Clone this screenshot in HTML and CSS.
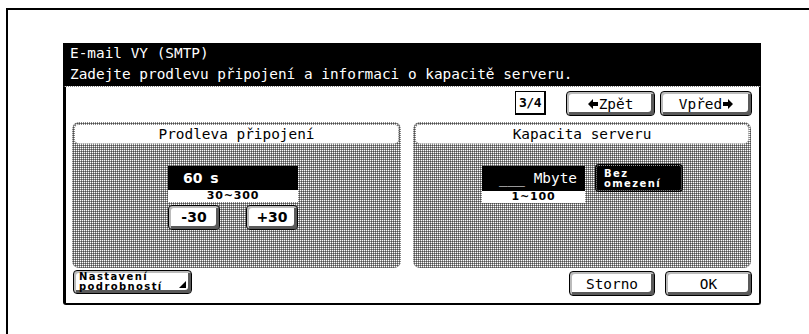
FILE: index.html
```html
<!DOCTYPE html>
<html lang="cs">
<head>
<meta charset="utf-8">
<title>E-mail VY (SMTP)</title>
<link rel="stylesheet" href="styles.css">
</head>
<body>
<div class="frame">
  <div class="panel">
    <div class="header">
      <div class="hline">E-mail VY (SMTP)</div>
      <div class="hline">Zadejte prodlevu připojení a informaci o kapacitě serveru.</div>
    </div>
    <div class="body">
      <div class="nav">
        <div class="page">3/4</div>
        <div class="btn navbtn"><svg class="arrow" viewBox="0 0 10 10" width="10" height="10"><path d="M0 5 L5 0 L5 3 L10 3 L10 7 L5 7 L5 10 Z" fill="#000"/></svg>Zpět</div>
        <div class="btn navbtn">Vpřed<svg class="arrow" viewBox="0 0 10 10" width="10" height="10"><path d="M10 5 L5 0 L5 3 L0 3 L0 7 L5 7 L5 10 Z" fill="#000"/></svg></div>
      </div>
      <div class="sections">
        <div class="section sec-left">
          <div class="sec-title">Prodleva připojení</div>
          <div class="sec-content shift">
            <div class="group">
              <div class="value">60 s</div>
              <div class="range">30~300</div>
              <div class="steps">
                <div class="btn step">-30</div>
                <div class="btn step">+30</div>
              </div>
            </div>
          </div>
        </div>
        <div class="section sec-right">
          <div class="sec-title">Kapacita serveru</div>
          <div class="sec-content">
            <div class="mgroup">
              <div class="mvalue"><span class="blank">___</span> Mbyte</div>
              <div class="range">1~100</div>
            </div>
            <div class="bez">Bez<br>omezení</div>
          </div>
        </div>
      </div>
      <div class="footer">
        <div class="btn detail"><span class="dtext">Nastavení<br>podrobností</span><span class="tri"></span></div>
        <div class="btn fbtn storno">Storno</div>
        <div class="btn fbtn ok">OK</div>
      </div>
    </div>
  </div>
</div>
</body>
</html>
```
FILE: styles.css
```css
html, body {
  margin: 0;
  padding: 0;
  background: #fff;
}
body {
  font-family: "DejaVu Sans Mono", "Liberation Mono", monospace;
  font-size: 14.4px;
  color: #000;
}
.frame {
  margin: 8px 0 0 6px;
  border-top: 2px solid #000;
  border-left: 2px solid #000;
  height: 326px;
  box-sizing: border-box;
  padding: 33px 0 0 55px;
}
.panel {
  width: 698px;
}
.header {
  background: #000;
  color: #fff;
  height: 43px;
  padding: 0 0 0 7px;
  box-sizing: border-box;
}
.hline {
  line-height: 21px;
  white-space: nowrap;
}
.body {
  height: 219px;
  box-sizing: border-box;
  border-top: 1px dotted #888;
  border-left: 3px solid #000;
  border-right: 2px solid #000;
  border-bottom: 2px solid #000;
  border-radius: 0 0 3px 3px;
  display: flex;
  flex-direction: column;
}
.nav {
  display: flex;
  justify-content: flex-end;
  align-items: flex-start;
  margin-top: 4px;
  padding-right: 7px;
  height: 25px;
}
.page {
  width: 31px;
  height: 24px;
  box-sizing: border-box;
  border: 1px solid #000;
  border-right-width: 2px;
  border-bottom-width: 2px;
  text-align: center;
  line-height: 21px;
  font-weight: bold;
  font-size: 13px;
  letter-spacing: -0.5px;
  margin-right: 20px;
}
.btn {
  background: #fff;
  border: 1px solid #000;
  border-radius: 4px;
  box-sizing: border-box;
  box-shadow: inset 2px 2px 0 #bbb, inset -3px -3px 0 #5a5a5a;
  display: flex;
  align-items: center;
  justify-content: center;
}
.navbtn {
  height: 25px;
  width: 89px;
  gap: 1px;
}
.navbtn + .navbtn {
  width: 92px;
  margin-left: 5px;
}
.arrow {
  display: block;
}
.sections {
  display: flex;
  gap: 12px;
  margin-top: 6px;
  padding-left: 6px;
  height: 146px;
}
.section {
  box-sizing: border-box;
  border: 1px dotted #888;
  border-radius: 7px;
  padding: 1px;
  background-color: #fff;
  background-image:
    linear-gradient(90deg, rgba(0,0,0,0.45) 1px, transparent 1px),
    linear-gradient(rgba(0,0,0,0.45) 1px, transparent 1px);
  background-size: 2px 2px;
}
.sec-left { width: 329px; }
.sec-right { width: 338px; }
.sec-title {
  background: #fff;
  border: 1px dotted #888;
  border-radius: 5px;
  height: 20px;
  box-sizing: border-box;
  line-height: 19px;
  text-align: center;
}
.sec-content {
  display: flex;
  justify-content: center;
  align-items: flex-start;
  padding-top: 22px;
  gap: 11px;
}
.sec-content.shift {
  padding-right: 7px;
}
.group {
  width: 130px;
}
.value {
  background: #000;
  color: #fff;
  height: 24px;
  line-height: 24px;
  padding-left: 15px;
  font-family: "DejaVu Sans", sans-serif;
  font-weight: bold;
  font-size: 14px;
  word-spacing: 3px;
}
.range {
  background: #fff;
  height: 12px;
  line-height: 12px;
  text-align: center;
  font-family: "DejaVu Sans", sans-serif;
  font-weight: bold;
  font-size: 11px;
  letter-spacing: 0.8px;
}
.steps {
  display: flex;
  justify-content: space-between;
  margin-top: 3px;
}
.step {
  width: 52px;
  height: 25px;
  font-family: "DejaVu Sans", sans-serif;
  font-weight: bold;
  font-size: 14px;
  padding-bottom: 1px;
}
.mgroup {
  width: 103px;
}
.mvalue {
  background: #000;
  color: #fff;
  height: 25px;
  line-height: 25px;
  text-align: right;
  padding-right: 8px;
  white-space: pre;
}
.bez {
  width: 86px;
  height: 26px;
  box-sizing: border-box;
  margin-top: -1px;
  background: #000;
  color: #fff;
  border: 1px dotted #999;
  box-shadow: 0 0 0 1px #000, inset 0 0 0 1px #000;
  border-radius: 3px;
  padding: 3px 0 0 7px;
  font-family: "DejaVu Sans", sans-serif;
  font-weight: bold;
  font-size: 10px;
  line-height: 9.5px;
  letter-spacing: 1.4px;
}
.footer {
  display: flex;
  align-items: flex-start;
  margin-top: 2px;
  padding: 0 7px 0 7px;
}
.detail {
  width: 119px;
  height: 24px;
  justify-content: flex-start;
  align-items: center;
  padding-left: 5px;
  padding-bottom: 1px;
  position: relative;
}
.dtext {
  font-family: "DejaVu Sans", sans-serif;
  font-weight: bold;
  font-size: 10px;
  line-height: 9.5px;
  letter-spacing: 1.4px;
}
.tri {
  position: absolute;
  right: 5px;
  bottom: 5px;
  width: 0;
  height: 0;
  border-left: 7px solid transparent;
  border-bottom: 7px solid #000;
}
.fbtn {
  height: 25px;
  margin-top: 1px;
}
.storno {
  width: 86px;
  margin-left: auto;
}
.ok {
  width: 87px;
  margin-left: 10px;
}
```
